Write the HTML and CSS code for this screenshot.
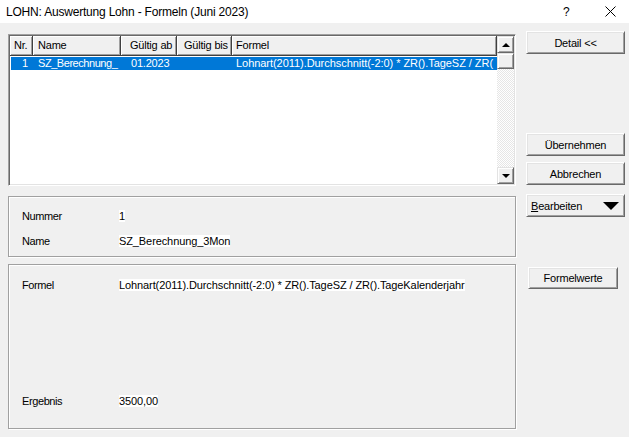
FILE: index.html
```html
<!DOCTYPE html>
<html lang="de">
<head>
<meta charset="utf-8">
<title>LOHN: Auswertung Lohn - Formeln (Juni 2023)</title>
<link rel="stylesheet" href="styles.css">
</head>
<body>
<div class="window">
  <header class="titlebar">
    <span class="title">LOHN: Auswertung Lohn - Formeln (Juni 2023)</span>
    <span class="tb-help">?</span>
    <span class="tb-close"><svg width="11" height="11" viewBox="0 0 11 11"><path d="M0.5 0.5 L10.5 10.5 M10.5 0.5 L0.5 10.5" stroke="#000" stroke-width="1" fill="none"/></svg></span>
  </header>
  <main class="content">
    <section class="left">
      <div class="listbox">
        <div class="list-main">
          <div class="list-head">
            <div class="hcell c-nr">Nr.</div>
            <div class="hcell c-name">Name</div>
            <div class="hcell c-ab">Gültig ab</div>
            <div class="hcell c-bis">Gültig bis</div>
            <div class="hcell c-formel">Formel</div>
          </div>
          <div class="list-row selected">
            <div class="cell c-nr num">1</div>
            <div class="cell c-name">SZ_Berechnung_</div>
            <div class="cell c-ab">01.2023</div>
            <div class="cell c-bis"></div>
            <div class="cell c-formel">Lohnart(2011).Durchschnitt(-2:0) * ZR().TageSZ / ZR(</div>
          </div>
        </div>
        <div class="vscroll">
          <div class="sb-btn"><span class="tri-up"></span></div>
          <div class="sb-thumb"></div>
          <div class="sb-track"></div>
          <div class="sb-btn"><span class="tri-down"></span></div>
        </div>
      </div>
      <div class="panel panel-info">
        <div class="field">
          <span class="lbl">Nummer</span><span class="val">1</span>
        </div>
        <div class="field">
          <span class="lbl">Name</span><span class="val">SZ_Berechnung_3Mon</span>
        </div>
      </div>
      <div class="panel panel-formel">
        <div class="field">
          <span class="lbl">Formel</span><span class="val">Lohnart(2011).Durchschnitt(-2:0) * ZR().TageSZ / ZR().TageKalenderjahr</span>
        </div>
        <div class="field field-result">
          <span class="lbl">Ergebnis</span><span class="val">3500,00</span>
        </div>
      </div>
    </section>
    <aside class="right">
      <button class="btn btn-detail">Detail &lt;&lt;</button>
      <button class="btn btn-uebernehmen">Übernehmen</button>
      <button class="btn btn-abbrechen">Abbrechen</button>
      <button class="btn btn-menu"><span><u>B</u>earbeiten</span><span class="tri-menu"></span></button>
      <button class="btn btn-formelwerte">Formelwerte</button>
    </aside>
  </main>
</div>
</body>
</html>
```
FILE: styles.css
```css
* { box-sizing: border-box; }
html, body { margin: 0; padding: 0; }
body {
  width: 629px;
  height: 437px;
  overflow: hidden;
  background: #f0f0f0;
  font-family: "Liberation Sans", Arial, sans-serif;
  font-size: 11px;
  color: #000;
}
.window { width: 629px; height: 437px; }

.titlebar {
  height: 23px;
  background: #fff;
  display: flex;
  align-items: center;
  padding-left: 6px;
}
.title {
  font-size: 12px;
  letter-spacing: -0.2px;
  flex: 1;
}
.tb-help {
  font-size: 12px;
  width: 12px;
  margin-right: 30px;
  margin-top: 1px;
}
.tb-close {
  width: 11px;
  height: 11px;
  margin-right: 13px;
  display: flex;
}

.content {
  display: flex;
  padding: 8px 0 0 8px;
  gap: 9px;
}
.left {
  width: 509px;
  display: flex;
  flex-direction: column;
}

/* list box */
.listbox {
  margin-top: 3px;
  width: 508px;
  height: 152px;
  background: #fff;
  border: 1px solid;
  border-color: #a0a0a0 #fff #fff #a0a0a0;
  box-shadow: inset 1px 1px 0 #696969, inset -1px -1px 0 #e3e3e3;
  padding: 1px;
  display: flex;
}
.list-main {
  width: 488px;
  overflow: hidden;
}
.list-head {
  display: flex;
  height: 20px;
}
.hcell {
  height: 20px;
  line-height: 19px;
  background: #f0f0f0;
  border-right: 1px solid #404040;
  border-bottom: 1px solid #404040;
  box-shadow: inset 1px 1px 0 #fff, inset -1px -1px 0 #a0a0a0;
  white-space: nowrap;
  overflow: hidden;
  letter-spacing: -0.2px;
}
.c-nr { width: 23px; padding-left: 4px; flex: none; }
.c-name { width: 88px; padding-left: 5px; flex: none; }
.c-ab { width: 56px; padding-left: 9px; flex: none; }
.c-bis { width: 55px; padding-left: 7px; flex: none; }
.c-formel { width: 265px; padding-left: 4px; flex: none; }

.list-row {
  display: flex;
  height: 13px;
  margin: 1px 0 0 1px;
  width: 486px;
}
.list-row.selected { background: #0078d7; color: #fff; }
.cell {
  line-height: 13px;
  white-space: nowrap;
  overflow: hidden;
  letter-spacing: -0.2px;
}
.list-row .c-nr { width: 22px; }
.list-row .c-name { padding-left: 5px; width: 88px; letter-spacing: -0.45px; }
.list-row .c-ab { padding-left: 10px; }
.list-row .c-formel { padding-left: 4px; width: 264px; letter-spacing: -0.05px; }
.cell.num { text-align: right; padding-right: 5px; padding-left: 0; }

/* scrollbar */
.vscroll {
  width: 17px;
  display: flex;
  flex-direction: column;
}
.sb-btn, .sb-thumb {
  background: #f0f0f0;
  border: 1px solid;
  border-color: #e3e3e3 #696969 #696969 #e3e3e3;
  box-shadow: inset 1px 1px 0 #fff, inset -1px -1px 0 #a0a0a0;
  flex: none;
}
.sb-btn {
  height: 17px;
  display: flex;
  align-items: center;
  justify-content: center;
}
.sb-thumb { height: 16px; }
.sb-track {
  flex: 1;
  background: repeating-conic-gradient(#ffffff 0 25%, #e6e6e6 0 50%) 0 0 / 2px 2px;
}
.tri-up {
  width: 0; height: 0;
  border-left: 4px solid transparent;
  border-right: 4px solid transparent;
  border-bottom: 4px solid #000;
}
.tri-down {
  width: 0; height: 0;
  border-left: 4px solid transparent;
  border-right: 4px solid transparent;
  border-top: 4px solid #000;
}

/* panels */
.panel {
  width: 508px;
  border: 1px solid #a0a0a0;
  box-shadow: inset 1px 1px 0 #fff, 1px 1px 0 #fff;
  padding-left: 13px;
}
.panel-info {
  margin-top: 10px;
  height: 61px;
  padding-top: 12px;
  display: flex;
  flex-direction: column;
  gap: 11px;
}
.panel-formel {
  margin-top: 7px;
  height: 165px;
  padding-top: 13px;
  display: flex;
  flex-direction: column;
}
.field {
  display: flex;
  height: 14px;
  align-items: center;
}
.field-result { margin-top: 102px; }
.lbl {
  width: 97px;
  flex: none;
  letter-spacing: -0.4px;
}
.val {
  background: #fff;
  line-height: 12px;
  white-space: nowrap;
  letter-spacing: -0.1px;
}

/* buttons */
.right {
  width: 99px;
  display: flex;
  flex-direction: column;
}
.btn {
  font-family: "Liberation Sans", Arial, sans-serif;
  font-size: 11px;
  letter-spacing: -0.2px;
  color: #000;
  width: 99px;
  height: 23px;
  padding: 0;
  margin: 0;
  background: #f0f0f0;
  border: 1px solid;
  border-color: #fff #696969 #696969 #fff;
  box-shadow: inset 1px 1px 0 #e3e3e3, inset -1px -1px 0 #a0a0a0;
  border-radius: 0;
  display: flex;
  align-items: center;
  justify-content: center;
}
.btn-uebernehmen { margin-top: 79px; }
.btn-abbrechen { margin-top: 6px; }
.btn-menu {
  margin-top: 9px;
  justify-content: space-between;
  padding: 0 5px 0 4px;
}
.tri-menu {
  width: 0; height: 0;
  border-left: 8px solid transparent;
  border-right: 8px solid transparent;
  border-top: 8px solid #000;
}
.btn-formelwerte {
  margin-top: 50px;
  margin-left: 2px;
  width: 90px;
  height: 22px;
}
```
